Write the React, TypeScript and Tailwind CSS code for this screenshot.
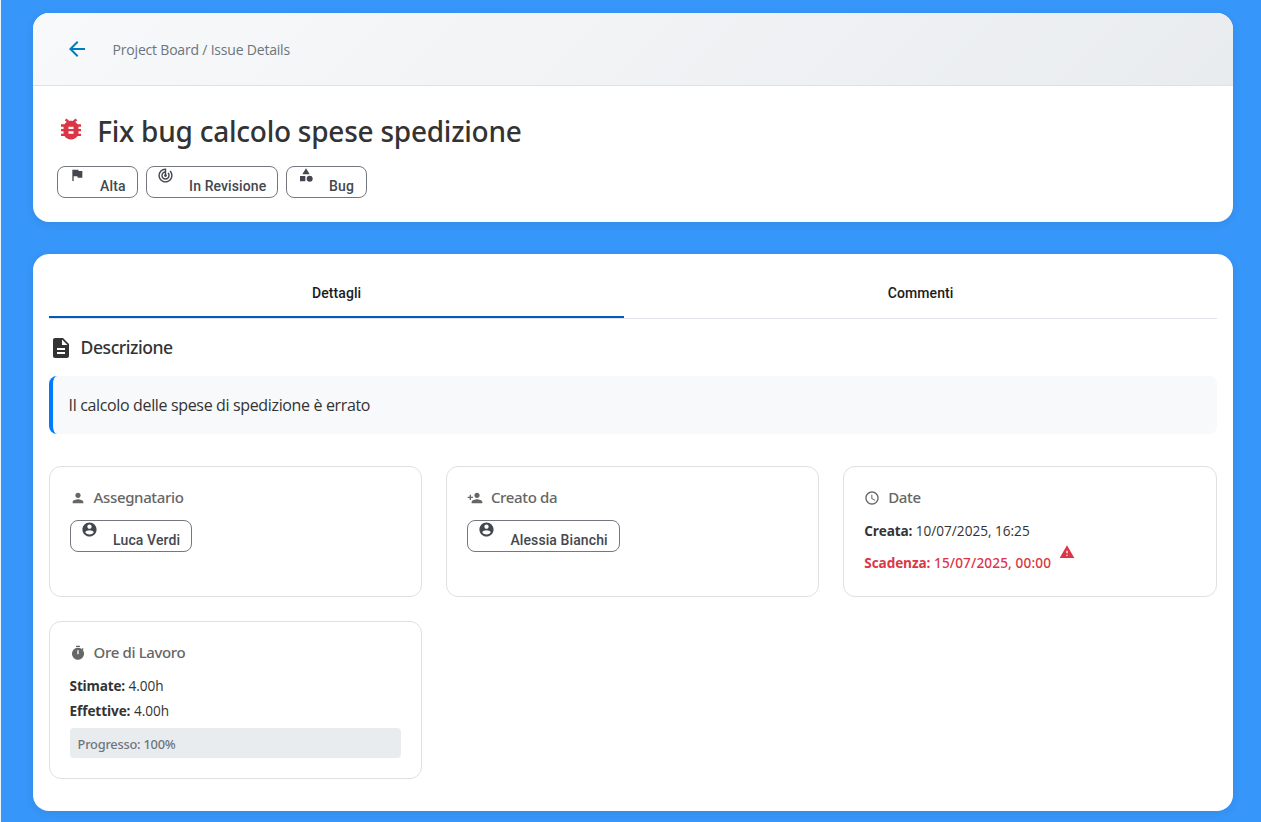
import type { ReactNode } from 'react';
import {
  MdArrowBack,
  MdBugReport,
  MdCategory,
  MdDescription,
  MdFlag,
  MdPerson,
  MdPersonAdd,
  MdTrackChanges,
  MdWarning,
} from 'react-icons/md';

function ClockIcon() {
  return (
    <svg viewBox="0 0 24 24" className="size-4" fill="currentColor">
      <path d="M11.99 2C6.47 2 2 6.48 2 12s4.47 10 9.99 10C17.52 22 22 17.52 22 12S17.52 2 11.99 2zM12 20c-4.42 0-8-3.58-8-8s3.58-8 8-8 8 3.58 8 8-3.58 8-8 8zm.5-13H11v6l5.25 3.15.75-1.23-4.5-2.67z" />
    </svg>
  );
}

function TimerIcon() {
  return (
    <svg viewBox="0 0 24 24" className="size-4" fill="currentColor">
      <path d="M9 1h6v2H9zM19.03 7.39l1.42-1.42c-.43-.51-.9-.99-1.41-1.41l-1.42 1.42A8.96 8.96 0 0 0 12 4c-4.97 0-9 4.03-9 9s4.02 9 9 9a8.994 8.994 0 0 0 7.03-14.61zM13 14h-2V8h2v6z" />
    </svg>
  );
}

function AccountIcon() {
  return (
    <svg viewBox="0 0 24 24" className="-ml-px size-[17px]" fill="currentColor">
      <path d="M12 2C6.48 2 2 6.48 2 12s4.48 10 10 10 10-4.48 10-10S17.52 2 12 2zm0 3c1.66 0 3 1.34 3 3s-1.34 3-3 3-3-1.34-3-3 1.34-3 3-3zm0 14.2c-2.5 0-4.71-1.28-6-3.22.03-1.99 4-3.08 6-3.08 1.99 0 5.97 1.09 6 3.08-1.29 1.94-3.5 3.22-6 3.22z" />
    </svg>
  );
}

function Chip({ icon, label, width }: { icon: ReactNode; label: string; width: string }) {
  return (
    <div className={`flex h-8 items-start rounded-lg border border-[#74777f] pl-[11px] text-[#44474e] ${width}`}>
      <span className="flex w-[31.5px] shrink-0">{icon}</span>
      <span className="mt-[9px] whitespace-nowrap font-[Roboto,sans-serif] text-sm/5 font-medium tracking-[0.1px]">
        {label}
      </span>
    </div>
  );
}

function InfoCard({ icon, title, children }: { icon: ReactNode; title: string; children: ReactNode }) {
  return (
    <section className="rounded-xl border border-[#e0e0e0] p-5">
      <h3 className="flex h-[21px] items-center text-[#666]">
        <span className="flex w-6">{icon}</span>
        <span className="font-['Noto_Sans',sans-serif] text-[15px] font-medium tracking-[-0.36px] whitespace-nowrap">{title}</span>
      </h3>
      {children}
    </section>
  );
}

export default function App() {
  return (
    <div className="h-[822px] overflow-hidden border-l border-[#eaf3fe] bg-[#3796f9] pt-[13px] pl-[31.6px] font-['Open_Sans','Noto_Sans',sans-serif] text-[#333]">
      <div className="h-[209px] w-[1200px] overflow-hidden rounded-2xl bg-white shadow-[0_2px_8px_rgba(0,0,0,0.08)]">
        <header className="flex h-[73px] items-center border-b border-[#dee2e6] bg-linear-135 from-[#f8f9fa] to-[#e9ecef] pl-8">
          <MdArrowBack className="size-6 text-[#007bbd]" />
          <span className="ml-6 text-[14px] tracking-[-0.2px] text-[#6c757d]">Project Board / Issue Details</span>
        </header>
        <div className="px-6 pt-[22px]">
          <div className="flex h-[46px] items-center">
            <MdBugReport preserveAspectRatio="none" className="mb-1 -ml-px h-7 w-[30px] text-[#dc3545]" />
            <h1 className="ml-[11.6px] font-['Noto_Sans',sans-serif] text-[28px] font-medium tracking-[-0.24px] whitespace-nowrap">
              Fix bug calcolo spese spedizione
            </h1>
          </div>
          <div className="mt-3 flex gap-2">
            <Chip icon={<MdFlag className="size-4" />} label="Alta" width="w-[81px]" />
            <Chip icon={<MdTrackChanges className="-ml-px size-[17px]" />} label="In Revisione" width="w-[132px]" />
            <Chip icon={<MdCategory className="size-4" />} label="Bug" width="w-[81px]" />
          </div>
        </div>
      </div>

      <main className="mt-8 h-[557px] w-[1200px] rounded-2xl bg-white p-4 shadow-[0_2px_8px_rgba(0,0,0,0.08)]">
        <nav className="flex h-[49px] border-b border-[#e1e2ec] font-[Roboto,sans-serif] text-sm font-medium tracking-[0.1px] text-[#1a1b1f]">
          <button className="h-12 w-[575px] border-b-2 border-[#005cbb] pl-px">Dettagli</button>
          <button className="h-12 flex-1 pb-0.5 pl-px">Commenti</button>
        </nav>
        <h2 className="mt-[17px] flex h-6 items-center">
          <MdDescription className="size-6" />
          <span className="mb-0.5 ml-2 font-['Noto_Sans',sans-serif] text-[17.6px] font-medium tracking-[-0.48px]">Descrizione</span>
        </h2>
        <p className="mt-4 flex h-[58px] items-center rounded-lg border-l-4 border-[#007bff] bg-[#f8f9fa] pl-4 text-base tracking-[-0.35px]">
          Il calcolo delle spese di spedizione è errato
        </p>
        <div className="mt-8 grid grid-cols-3 grid-rows-[131px_158px] gap-6">
          <InfoCard icon={<MdPerson className="size-4" />} title="Assegnatario">
            <div className="mt-3">
              <Chip icon={<AccountIcon />} label="Luca Verdi" width="w-[122px]" />
            </div>
          </InfoCard>
          <InfoCard icon={<MdPersonAdd className="size-4" />} title="Creato da">
            <div className="mt-3">
              <Chip icon={<AccountIcon />} label="Alessia Bianchi" width="w-[153px]" />
            </div>
          </InfoCard>
          <InfoCard icon={<ClockIcon />} title="Date">
            <p className="mt-3 text-[13.6px]/[22px]">
              <b className="tracking-[-0.15px]">Creata:</b> 10/07/2025, 16:25
            </p>
            <p className="mt-0.5 flex h-[30px] items-start font-['Noto_Sans',sans-serif] text-[13.6px]/[22px] font-medium text-[#dc3545]">
              <span className="mt-2 tracking-[0.14px] whitespace-pre"><b className="font-['Open_Sans',sans-serif] tracking-[-0.1px]">Scadenza:</b> 15/07/2025, 00:00</span>
              <MdWarning className="ml-2 size-4" />
            </p>
          </InfoCard>
          <InfoCard icon={<TimerIcon />} title="Ore di Lavoro">
            <p className="mt-3 text-[13.6px]/[22px]">
              <b className="tracking-[-0.2px]">Stimate:</b> 4.00h
            </p>
            <p className="mt-[3px] text-[13.6px]/[22px]">
              <b className="tracking-[-0.1px]">Effettive:</b> 4.00h
            </p>
            <div className="mt-1.5 flex h-[30px] items-center rounded bg-[#e9ecef] pt-1 pl-2 font-['Noto_Sans',sans-serif] text-[12.8px] font-medium tracking-[-0.22px] text-[#6c757d]">
              Progresso: 100%
            </div>
          </InfoCard>
        </div>
      </main>
    </div>
  );
}
